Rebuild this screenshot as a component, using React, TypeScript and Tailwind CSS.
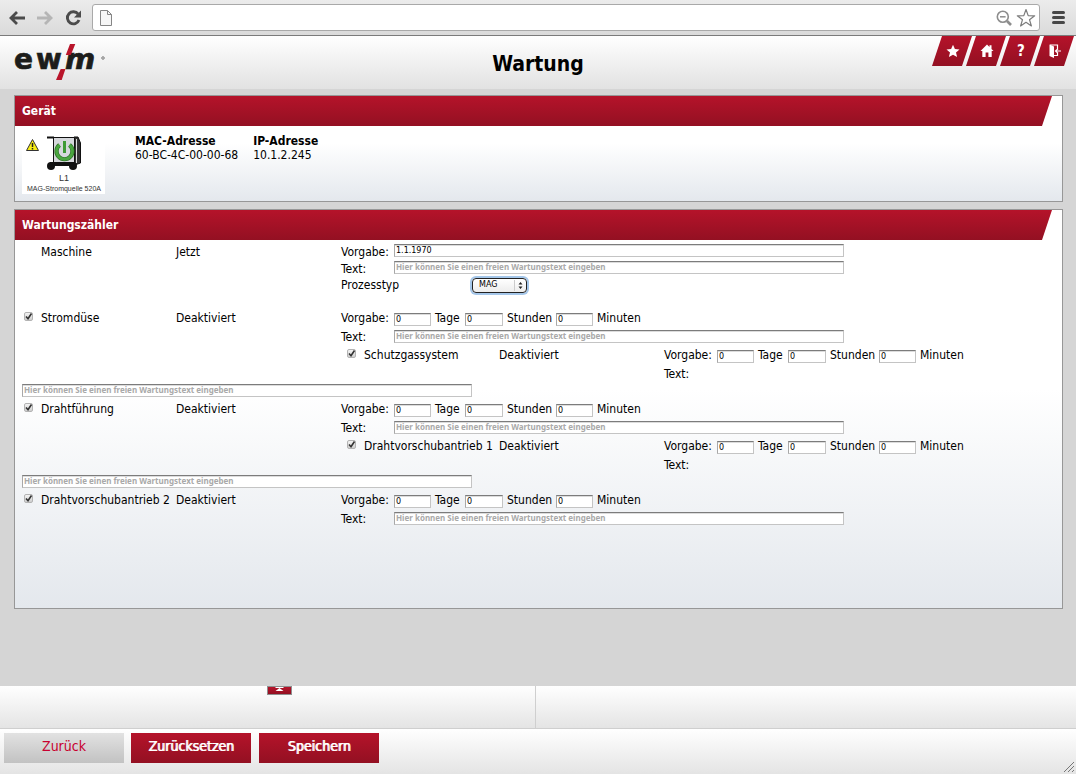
import React, { useId } from 'react';

const PLACEHOLDER = 'Hier können Sie einen freien Wartungstext eingeben';
const FIELD =
  "h-[13px] border border-[#c4c4c4] border-t-[#7c7c7c] border-l-[#a8a8a8] bg-white p-px font-['DejaVu_Sans',sans-serif] text-[8px] leading-none text-black outline-none shadow-[inset_0_1px_0_#dcdcdc]";

/* ---------- Browser bar ---------- */

const BrowserBar: React.FC = () => (
  <div className="flex h-9 items-center border-b border-[#7b7b7b] bg-linear-to-b from-[#ececec] to-[#dadada] pr-[11px] pl-2">
    <button aria-label="Zurück" className="flex h-5 w-[18px] items-center justify-center">
      <svg viewBox="0 0 18 18" className="h-[18px] w-[18px]" fill="none" stroke="#4b4b4b" strokeWidth="2.8">
        <path d="M17 9H4M9 3 3 9l6 6" />
      </svg>
    </button>
    <button aria-label="Vorwärts" className="ml-2.5 flex h-5 w-[18px] items-center justify-center">
      <svg viewBox="0 0 18 18" className="h-[18px] w-[18px]" fill="none" stroke="#b5b5b5" strokeWidth="2.8">
        <path d="M1 9h13M9 3l6 6-6 6" />
      </svg>
    </button>
    <button aria-label="Neu laden" className="ml-2.5 flex h-5 w-[18px] items-center justify-center">
      <svg viewBox="0 0 18 18" className="h-[18px] w-[18px]">
        <path d="M14.2 5.2A6 6 0 1 0 15 11" fill="none" stroke="#4b4b4b" strokeWidth="2.9" />
        <path d="M17 1.500v7h-7z" fill="#4b4b4b" />
      </svg>
    </button>
    <div className="ml-2.5 flex h-[27px] flex-1 items-center rounded-[3px] border border-[#a9a9a9] bg-white px-[7px]">
      <svg viewBox="0 0 12 16" className="h-4 w-3" fill="#f6f6f6" stroke="#858585">
        <path d="M.5.5h7l4 4v11H.5z" />
        <path d="M7.500.5v4h4" fill="none" />
      </svg>
      <input aria-label="Adresse" className="h-5 min-w-0 flex-1 px-2 text-[13px] outline-none" />
      <svg viewBox="0 0 16 16" className="h-4 w-4" fill="none" stroke="#8d8d8d">
        <circle cx="6.800" cy="6.800" r="5.500" strokeWidth="1.600" />
        <path d="M4 6.800h5.600" strokeWidth="1.500" />
        <path d="m11 11 4 4" strokeWidth="2.600" />
      </svg>
      <svg viewBox="0 0 20 20" className="-mr-1 ml-1 h-5 w-5" fill="#fff" stroke="#7d7d7d" strokeWidth="1.200">
        <path d="m10 1.500 2.200 6.100 6.500.2-5.200 3.900 1.900 6.300L10 14.300 4.600 18l1.900-6.300L1.300 7.800l6.500-.2z" strokeLinejoin="round" />
      </svg>
    </div>
    <button aria-label="Menü" className="ml-3 flex h-5 w-[13px] flex-col justify-center gap-0.5">
      <span className="h-[3px] rounded-sm bg-[#474747]" />
      <span className="h-[3px] rounded-sm bg-[#474747]" />
      <span className="h-[3px] rounded-sm bg-[#474747]" />
    </button>
  </div>
);

/* ---------- Page header ---------- */

const Logo: React.FC = () => (
  <svg viewBox="0 0 92 38" className="h-[38px] w-[92px]" role="img" aria-label="ewm">
    <g
      fill="#1d1d1b"
      stroke="#1d1d1b"
      strokeWidth="0.700"
      fontFamily="'DejaVu Sans', sans-serif"
      fontWeight="700"
      fontSize="28"
    >
      <text x="0" y="26">e</text>
      <text x="22" y="26">w</text>
      <text x="51" y="26" fontStyle="italic" fontSize="29">m</text>
    </g>
    <path d="M53 10 47.500 27" stroke="#f0f0f0" strokeWidth="2" />
    <path d="M56 1h5.300L56.800 12h-5zM46.700 26h4.700L47.700 37H42z" fill="#b9152b" />
    <circle cx="89" cy="15" r="1.300" fill="#ccc" stroke="#8a8a8a" />
  </svg>
);

const NAV = [
  {
    label: 'Favoriten',
    icon: <path d="m8 1.800 1.900 4.300 4.600.4-3.500 3 1.100 4.600L8 11.700l-4.100 2.400L5 9.500l-3.500-3 4.600-.4z" />,
  },
  {
    label: 'Startseite',
    icon: <path d="M8 1.500 10.500 4V2.200h2v3.700L14.500 8h-1.800v6H9.400V9.500H6.600V14H3.300V8H1.500z" />,
  },
  { label: 'Hilfe', icon: null },
  {
    label: 'Abmelden',
    icon: (
      <>
        <path d="M2.500 1.500 7 3.500v11.500L2.500 13z" />
        <path d="M3 2H10.500V6M10.500 10v2.500H7M14 8H8.500m2.500-2.200L8.500 8l2.500 2.200" fill="none" stroke="#fff" strokeWidth="1.200" />
      </>
    ),
  },
];

const PageHeader: React.FC = () => (
  <header className="grid h-[53px] grid-cols-[1fr_auto_1fr] bg-linear-to-b from-white to-[#e2e2e2]">
    <div className="pt-[7px] pl-3.5">
      <Logo />
    </div>
    <h1 className="self-center pt-0.5 text-[21px] font-bold">Wartung</h1>
    <nav className="flex justify-end pr-0.5">
      {NAV.map((item) => (
        <a
          key={item.label}
          href="#"
          aria-label={item.label}
          className="-ml-1.5 flex h-[30px] w-10 items-center justify-center bg-linear-to-b from-[#b5132a] to-[#931022] pl-0.5 text-[15px] font-bold text-white [clip-path:polygon(25%_0,100%_0,75%_100%,0_100%)]"
        >
          {item.icon ? (
            <svg viewBox="0 0 16 16" className="h-4 w-4" fill="#fff">
              {item.icon}
            </svg>
          ) : (
            '?'
          )}
        </a>
      ))}
    </nav>
  </header>
);

/* ---------- Panels ---------- */

const Panel: React.FC<{ title: string; children: React.ReactNode }> = ({ title, children }) => (
  <section className="border border-[#979797] bg-linear-to-b from-white from-45% to-[#e4e8ed]">
    <h2 className="mr-2.5 flex h-[30px] items-center bg-linear-to-b from-[#b5132a] to-[#931022] pl-[7px] text-[12px] font-bold text-white [clip-path:polygon(0_0,100%_0,calc(100%_-_10px)_100%,0_100%)]">
      {title}
    </h2>
    {children}
  </section>
);

const Device: React.FC = () => (
  <svg viewBox="0 0 83 60" className="h-[60px] w-[83px]" role="img" aria-label="MAG-Stromquelle 520A">
    <path d="M0 0h83v60H0z" fill="#fff" />
    <path d="M10.500 5.500 16.500 16.500h-12z" fill="#f7ec13" stroke="#333" strokeLinejoin="round" />
    <path d="M10.500 9v4M10.500 14v1.500" stroke="#222" strokeWidth="1.500" />
    <path d="M52 3 56 3l2.500 6v20l-6 2z" fill="#333" stroke="#111" />
    <path d="M54.500 5v24" stroke="#ddd" />
    <path d="M31.500 3.500h21v26l-3 2H31.500z" fill="#d6d8dc" stroke="#111" />
    <path d="M25 3.500h7" stroke="#111" strokeWidth="2" />
    <path d="M28 29.500h24" stroke="#111" strokeWidth="3" />
    <circle cx="29" cy="32" r="4" fill="#111" />
    <circle cx="51" cy="32" r="4" fill="#111" />
    <path d="M37.500 11a8 8 0 1 0 10 0" fill="none" stroke="#2c6b26" strokeWidth="4.200" />
    <path d="M37.500 11a8 8 0 1 0 10 0" fill="none" stroke="#4aa63f" strokeWidth="3" />
    <path d="M42.500 7v12" stroke="#3f9a35" strokeWidth="3" />
    <g fill="#333" fontFamily="'Liberation Sans', Arial, sans-serif" textAnchor="middle">
      <text x="42" y="47" fontSize="9">L1</text>
      <text x="42" y="57" fontSize="7">MAG-Stromquelle 520A</text>
    </g>
  </svg>
);

const TextField: React.FC<{ label: string; id?: string }> = ({ label, id }) => (
  <input
    id={id}
    type="text"
    aria-label={label}
    placeholder={PLACEHOLDER}
    className={`${FIELD} w-[450px] placeholder:font-['Noto_Sans',sans-serif] placeholder:font-bold placeholder:text-[#a9a9a9]`}
  />
);

const Duration: React.FC<{ name: string }> = ({ name }) => {
  const id = useId();
  return (
    <div className="flex h-5 items-start leading-5">
      <span className="w-[53px]">Vorgabe:</span>
      <input id={`${id}d`} aria-label={`${name} Tage`} defaultValue="0" className={`${FIELD} mt-[5px] w-[37px]`} />
      <label htmlFor={`${id}d`} className="w-[34px] pl-1">Tage</label>
      <input id={`${id}h`} aria-label={`${name} Stunden`} defaultValue="0" className={`${FIELD} mt-[5px] w-[38px]`} />
      <label htmlFor={`${id}h`} className="w-[53px] pl-1">Stunden</label>
      <input id={`${id}m`} aria-label={`${name} Minuten`} defaultValue="0" className={`${FIELD} mt-[5px] w-[37px]`} />
      <label htmlFor={`${id}m`} className="pl-1">Minuten</label>
    </div>
  );
};

const Row: React.FC<{ name: string; status: string; checkable?: boolean; children: React.ReactNode }> = ({
  name,
  status,
  checkable = true,
  children,
}) => {
  const id = useId();
  return (
    <div className="grid grid-cols-[19px_135px_165px_1fr] whitespace-nowrap">
      <div className="pt-1 pl-0.5">
        {checkable && (
          <span className="grid h-[9px] w-[9px]">
            <input
              id={id}
              type="checkbox"
              defaultChecked
              className="peer col-start-1 row-start-1 appearance-none rounded-[2px] border border-[#b3b3b3] bg-linear-to-b from-[#f4f4f4] to-[#cfcfcf]"
            />
            <svg viewBox="0 0 9 9" className="pointer-events-none invisible col-start-1 row-start-1 peer-checked:visible">
              <path d="M2 4.500 4 6.800 7.500 1.500" fill="none" stroke="#333" strokeWidth="1.600" />
            </svg>
          </span>
        )}
      </div>
      {checkable ? (
        <label htmlFor={id} className="h-5 leading-5">{name}</label>
      ) : (
        <span className="leading-4">{name}</span>
      )}
      <span className={checkable ? 'leading-5' : 'leading-4'}>{status}</span>
      <div>{children}</div>
    </div>
  );
};

const Counter: React.FC<{ name: string; nested?: string }> = ({ name, nested }) => (
  <>
    <Row name={name} status="Deaktiviert">
      <Duration name={name} />
      <div className="flex h-[17px] items-start leading-[18px]">
        <span className="w-[53px]">Text:</span>
        <div className="flex pt-0.5">
          <TextField label={`${name} Text`} />
        </div>
      </div>
    </Row>
    {nested && (
      <>
        <div className="ml-[323px]">
          <Row name={nested} status="Deaktiviert">
            <Duration name={nested} />
            <div className="h-[19px] leading-[18px]">Text:</div>
          </Row>
        </div>
        <div className="flex h-[15px] items-start">
          <TextField label={`${nested} Text`} />
        </div>
      </>
    )}
  </>
);

const Machine: React.FC = () => (
  <Row name="Maschine" status="Jetzt" checkable={false}>
    <div className="flex h-4 items-start leading-4">
      <label htmlFor="date" className="w-[53px]">Vorgabe:</label>
      <input id="date" type="text" defaultValue="1.1.1970" className={`${FIELD} w-[450px]`} />
    </div>
    <div className="flex h-[17px] items-center">
      <label htmlFor="text" className="w-[53px]">Text:</label>
      <div className="flex h-[17px] items-start pt-px">
        <TextField id="text" label="Maschine Text" />
      </div>
    </div>
    <div className="flex h-4 items-center">
      <label htmlFor="process" className="w-[131px]">Prozesstyp</label>
      <div className="grid items-center">
        <select
          id="process"
          className="col-start-1 row-start-1 h-[15px] w-[55px] appearance-none rounded-[4px] border border-[#222] bg-linear-to-b from-white to-[#ededed] pl-1.5 font-['DejaVu_Sans',sans-serif] text-[8px] leading-3 shadow-[0_0_0_2px_#a5c7ea] outline-none"
        >
          <option>MAG</option>
          <option>WIG</option>
        </select>
        <svg viewBox="0 0 12 13" className="pointer-events-none col-start-1 row-start-1 mr-px h-[13px] w-3 justify-self-end">
          <path d="M.5 1v11" stroke="#ccc" />
          <path d="M4.500 5.500 6.500 3l2 2.500zM4.500 7.500l2 2.500 2-2.500z" fill="#222" />
        </svg>
      </div>
    </div>
  </Row>
);

/* ---------- Footer ---------- */

const RED_BUTTON =
  'h-[30px] w-[120px] bg-linear-to-b from-[#b5132a] to-[#931022] pb-1 text-[14px] text-white [text-shadow:1px_0_#fff]';

const Footer: React.FC = () => (
  <footer>
    <div className="grid h-[43px] grid-cols-2 border-b border-[#cfcfcf] bg-linear-to-b from-white to-[#e4e4e4]">
      <div className="mr-0.5 flex items-start border-r border-[#cfcfcf] pl-[267px]">
        <button
          aria-label="Aufklappen"
          className="flex h-[9px] w-[25px] justify-center border border-[#8f8f8f] bg-linear-to-b from-[#b5132a] to-[#931022]"
        >
          <svg viewBox="0 0 9 6" className="h-1.5 w-[9px]" fill="#fff">
            <path d="M.5 0h8v1h-8zM4.500 1 8.500 4h-8z" />
          </svg>
        </button>
      </div>
    </div>
    <div className="flex h-[45px] items-start bg-linear-to-b from-white to-[#e4e4e4] pl-1">
      <div className="flex flex-1 gap-2 pt-1">
        <button className="-mr-px h-[30px] w-[120px] bg-linear-to-b from-[#e2e2e2] to-[#c2c2c2] pb-1 text-[14px] text-[#c8002f]">
          Zurück
        </button>
        <button className={RED_BUTTON}>Zurücksetzen</button>
        <button className={RED_BUTTON}>Speichern</button>
      </div>
      <svg viewBox="0 0 12 12" className="mr-px mb-px h-3 w-3 self-end" stroke="#777">
        <path d="M1 11 11 1M5 11l6-6M9 11l2-2" />
      </svg>
    </div>
  </footer>
);

export default function App() {
  return (
    <div className="flex min-h-screen flex-col bg-[#d5d5d5] font-['DejaVu_Sans_Condensed','DejaVu_Sans',sans-serif] text-[12px] leading-[14px] text-black">
      <BrowserBar />
      <PageHeader />
      <main className="flex flex-1 flex-col gap-[7px] pt-1.5 pr-[13px] pb-4 pl-3.5">
        <Panel title="Gerät">
          <div className="flex items-start px-[7px] pt-2 pb-[7px]">
            <Device />
            <dl className="ml-[30px] flex gap-[15px]">
              <div>
                <dt className="font-bold">MAC-Adresse</dt>
                <dd>60-BC-4C-00-00-68</dd>
              </div>
              <div>
                <dt className="font-bold">IP-Adresse</dt>
                <dd>10.1.2.245</dd>
              </div>
            </dl>
          </div>
        </Panel>
        <Panel title="Wartungszähler">
          <div className="px-[7px] pt-1 pb-[81px]">
            <Machine />
            <div className="mt-[15px]">
              <Counter name="Stromdüse" nested="Schutzgassystem" />
              <Counter name="Drahtführung" nested="Drahtvorschubantrieb 1" />
              <Counter name="Drahtvorschubantrieb 2" />
            </div>
          </div>
        </Panel>
      </main>
      <Footer />
    </div>
  );
}
